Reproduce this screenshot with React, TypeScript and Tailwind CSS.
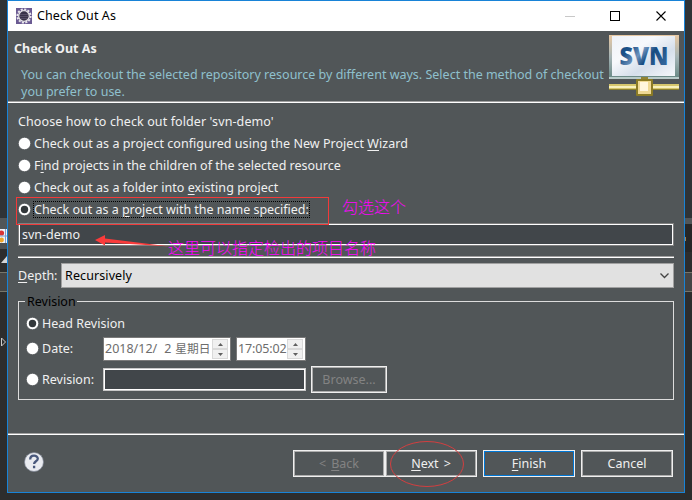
import type { ReactNode } from "react";

function U({ children }: { children: ReactNode }) {
  return <span className="underline decoration-1 underline-offset-2">{children}</span>;
}

function Radio({ checked = false }: { checked?: boolean }) {
  return (
    <svg width="13" height="13" viewBox="0 0 13 13" className="mb-px shrink-0">
      <circle cx="6.5" cy="6.5" r="6.2" fill="#fff" stroke="#33373a" strokeWidth=".6" />
      {checked && <circle cx="6.5" cy="6.5" r="3.7" fill="#33383b" />}
    </svg>
  );
}

function Option({ checked, children }: { checked?: boolean; children: ReactNode }) {
  return (
    <div className="flex h-[22px] items-center gap-[3px]">
      <Radio checked={checked} />
      <span className="leading-[14px] whitespace-nowrap">{children}</span>
    </div>
  );
}

function Spinner() {
  return (
    <div className="flex h-[20px] w-4 shrink-0 flex-col">
      <div className="flex h-[10px] items-center justify-center border border-[#d9d9d9] bg-[#f0f0f0]">
        <svg width="5" height="3"><path d="M0 3h5L2.5 0z" fill="#606060" /></svg>
      </div>
      <div className="flex h-[10px] items-center justify-center border border-[#d9d9d9] bg-[#f0f0f0]">
        <svg width="5" height="3"><path d="M0 0h5L2.5 3z" fill="#606060" /></svg>
      </div>
    </div>
  );
}

function Button({ className = "", inner = "border-[#adadad]", children }: { className?: string; inner?: string; children: ReactNode }) {
  return (
    <button className={`flex h-[27px] border border-[#f0f0f0] ${className}`}>
      <span className={`flex h-full w-full items-center justify-center border ${inner}`}>
        <span className="whitespace-pre pt-px leading-[14px]">{children}</span>
      </span>
    </button>
  );
}

function Rule() {
  return <div className="h-[2px] shrink-0 border-t border-[#a0a0a0] bg-white" />;
}

function EclipseIcon() {
  return (
    <svg width="16" height="16" viewBox="0 0 16 16">
      <rect width="16" height="16" fill="#6a5a92" />
      <circle cx="8" cy="8" r="6.6" fill="none" stroke="#e9e7ec" strokeWidth="2" strokeDasharray="2.1 1.350" />
      <circle cx="8" cy="8" r="5.3" fill="#38324a" stroke="#e3e1e6" strokeWidth="1.3" />
      <path d="M4 6.5h8M3.5 8.5h9M4.5 10.5h7" stroke="#5d566e" strokeWidth=".8" />
    </svg>
  );
}

function SvnLogo() {
  return (
    <svg width="70" height="62" viewBox="0 0 70 62">
      <defs>
        <linearGradient id="frame" x1="0" y1="0" x2="0" y2="1">
          <stop offset="0" stopColor="#e8c8a2" />
          <stop offset=".5" stopColor="#a5b4b6" />
          <stop offset="1" stopColor="#668783" />
        </linearGradient>
        <linearGradient id="screen" x1="0" y1="0" x2="1" y2="1">
          <stop offset="0" stopColor="#eef2f8" />
          <stop offset=".35" stopColor="#f7f9fc" />
          <stop offset=".65" stopColor="#d6dfeb" />
          <stop offset="1" stopColor="#f6f8fb" />
        </linearGradient>
        <linearGradient id="letters" x1="0" y1="0" x2="1" y2=".6">
          <stop offset="0" stopColor="#184b80" />
          <stop offset=".28" stopColor="#1c5188" />
          <stop offset=".5" stopColor="#6e93bd" />
          <stop offset=".68" stopColor="#174b80" />
          <stop offset="1" stopColor="#31649a" />
        </linearGradient>
      </defs>
      <rect width="70" height="44" fill="url(#frame)" />
      <rect x="3" y="1" width="63" height="40" fill="url(#screen)" />
      <rect y="42" width="70" height="2" fill="#b9cbca" />
      <text x="10.5" y="30" textLength="49" lengthAdjust="spacingAndGlyphs" fontFamily="Open Sans, Noto Sans" fontWeight="800" fontSize="24" fill="url(#letters)">SVN</text>
      <rect x="32" y="42" width="7" height="3" fill="#918435" />
      <rect y="49" width="70" height="6" fill="#d6c76c" />
      <rect y="51" width="70" height="2" fill="#f8f1bc" />
      <rect y="54" width="70" height="1" fill="#8c802d" />
      <rect x="27" y="44" width="17" height="17" rx="1" fill="#8b7b25" />
      <rect x="29" y="46" width="13" height="13" fill="#efd995" />
      <rect x="31" y="47" width="8" height="9" fill="#fff6df" />
    </svg>
  );
}

function LeftBackdrop() {
  return (
    <div className="flex w-[7px] shrink-0 flex-col bg-[#2d2d2d]">
      <div className="h-[218px] bg-[#2f3336]" />
      <div className="h-[11px] bg-[#515658]" />
      <svg width="7" height="14" viewBox="0 0 7 14">
        <rect width="7" height="14" fill="#eef3fa" />
        <circle cx="1.5" cy="4" r="2.6" fill="#d93434" />
        <path d="M0 7h7M5.5 0v14" stroke="#7f9cc9" />
        <circle cx="1.5" cy="11" r="2.4" fill="#efa529" />
      </svg>
      <div className="h-[6px] bg-[#4c5052]" />
      <div className="h-[23px] pt-[7px]">
        <svg width="7" height="7"><path d="M7 0v7H1z" fill="#d4d4d4" /></svg>
      </div>
      <div className="h-[20px] border-y border-[#77766b] bg-[#454545]" />
      <div className="pt-[45px]">
        <svg width="7" height="10"><path d="M1.5 1v8L5.5 5z" fill="none" stroke="#ccc" /></svg>
      </div>
    </div>
  );
}

function RightBackdrop() {
  return (
    <div className="flex w-[7px] shrink-0 flex-col bg-[#2d2d2d]">
      <div className="h-[218px] bg-[#2f3336]" />
      <div className="h-[6px] bg-[#515658]" />
      <div className="h-[28px] bg-[#262626] pt-[13px]">
        <div className="h-[4px] w-px bg-[#a8824f]" />
      </div>
      <div className="h-[20px]" />
      <div className="h-[20px] border-y border-[#77766b] bg-[#454545]" />
    </div>
  );
}

export default function App() {
  return (
    <div className="relative flex h-[500px] w-[692px] overflow-hidden bg-[#2d2d2d] font-['Noto_Sans','Noto_Sans_CJK_SC',sans-serif] text-[12.5px] text-[#f0f0f0]">
      <LeftBackdrop />
      <main className="flex h-[493px] w-[678px] shrink-0 flex-col border border-[#1883d7] bg-[#515658]">
        <header className="flex h-[30px] shrink-0 items-center bg-white pl-2 text-black">
          <EclipseIcon />
          <h1 className="ml-[5px] grow tracking-[0.1px]">Check Out As</h1>
          <svg width="102" height="12" className="mr-[17px]" fill="none" shapeRendering="crispEdges">
            <path d="M0 6.5h10" stroke="#c8c8c8" />
            <rect x="45.5" y="1.5" width="9" height="9" stroke="#000" />
            <path d="M91.5 1.5l9 9m0-9l-9 9" stroke="#000" shapeRendering="auto" strokeWidth="1.1" />
          </svg>
        </header>

        <section className="flex h-[70px] shrink-0 justify-between pl-[6px]">
          <div className="pt-[9px]">
            <h2 className="leading-[18px] font-bold">Check Out As</h2>
            <p className="mt-[8px] ml-[7px] w-[588px] leading-[17px] whitespace-nowrap text-[#8fc0cd]">
              You can checkout the selected repository resource by different ways. Select the method of checkout
              <br />
              you prefer to use.
            </p>
          </div>
          <div className="mr-[5px] pt-1"><SvnLogo /></div>
        </section>
        <Rule />

        <section className="flex h-[330px] shrink-0 flex-col px-[10px]">
          <p className="mt-[8px] h-[21px] leading-[21px] tracking-[0.1px]">Choose how to check out folder 'svn-demo'</p>
          <div className="mt-[1px] h-[90px]">
            <Option><span className="tracking-[0.04px]">Check out as a project configured using the New Project <U>W</U>izard</span></Option>
            <Option>F<U>i</U>nd projects in the children of the selected resource</Option>
            <Option><span className="tracking-[0.04px]">Check out as a folder into <U>e</U>xisting project</span></Option>
            <Option checked>
              <span className="-mt-px -ml-px block h-[17px] border border-dotted border-black leading-[16px] tracking-[-0.02px]">Check out as a <U>p</U>roject with the name specified:</span>
            </Option>
          </div>
          <div className="h-[23px] shrink-0 border border-[#808080]">
            <div className="flex h-full items-center border border-white bg-[#41464a] pt-px pl-[2px]">svn-demo</div>
          </div>
          <div className="mt-[10px]"><Rule /></div>
          <div className="mt-[5px] flex h-[25px] shrink-0 items-center">
            <span className="w-[43px] shrink-0 leading-[14px]"><U>D</U>epth:</span>
            <div className="flex h-[25px] grow items-center justify-between border border-[#a0a0a0] bg-[#e1e1e1] pt-px pr-[4px] pl-[3px] text-black">
              <span className="tracking-[0.1px]">Recursively</span>
              <svg width="9" height="6" fill="none"><path d="M.5.5l4 4 4-4" stroke="#444" strokeWidth="1.3" /></svg>
            </div>
          </div>
          <div className="mt-[13px] h-[99px] shrink-0 border border-[#dcdcdc]">
            <div className="-mt-[8px] ml-[6px] h-[16px] w-[52px] bg-[#515658] pl-[2px] leading-[16px] text-black">Revision</div>
            <div className="mt-[3px] ml-[7px]"><Option checked>Head Revision</Option></div>
            <div className="mt-[2px] ml-[7px] flex h-[24px] items-center">
              <div className="w-[77px]"><Option>Date:</Option></div>
              <div className="flex h-[24px] w-[128px] items-center justify-between border border-[#7a7a7a] bg-white pr-[2px] pl-[1px] whitespace-pre text-[#6d6d6d]">
                <span className="flex items-center"><span>2018/12/</span><span className="ml-[7px]">2</span><span className="ml-[4px] text-[11.7px]">星期日</span></span><Spinner />
              </div>
              <div className="ml-[5px] flex h-[24px] w-[70px] items-center justify-between border border-[#7a7a7a] bg-white pr-[2px] pl-[1px] text-[#6d6d6d]">
                <span className="tracking-[-0.15px]">17:05:02</span><Spinner />
              </div>
            </div>
            <div className="mt-[5px] ml-[7px] flex h-[27px] items-center">
              <div className="w-[77px]"><Option>Revision:</Option></div>
              <div className="h-[23px] w-[203px] border border-[#c8c8c8]"><div className="h-full border border-white bg-[#41464a]" /></div>
              <Button className="ml-[5px] w-[76px] text-[#838383]">Browse...</Button>
            </div>
          </div>
        </section>
        <Rule />

        <footer className="flex h-[57px] shrink-0 items-start pt-[15px] pr-[11px] pl-[16px]">
          <svg width="20" height="20" viewBox="0 0 20 20" className="mt-[2px] mr-auto">
            <circle cx="10" cy="10" r="9.5" fill="#e9ebf0" stroke="#7c8494" strokeWidth=".7" />
            <path d="M6.2 7.4c0-5 7.6-4.6 7.6-.7 0 2.5-3.7 2.7-3.7 5.2M10.1 13.8v2.5" fill="none" stroke="#49587c" strokeWidth="2.3" />
          </svg>
          <Button className="w-[92px] text-[#838383]"><span className="mr-[5px]">{"<"}</span><U>B</U>ack</Button>
          <Button className="w-[92px]"><U>N</U>ext<span className="ml-[5px]">{">"}</span></Button>
          <Button className="ml-[6px] w-[92px]" inner="border-[#0078d7]"><U>F</U>inish</Button>
          <Button className="ml-[6px] w-[92px]">Cancel</Button>
        </footer>
      </main>
      <RightBackdrop />

      <svg className="pointer-events-none absolute inset-0" width="692" height="500" fill="none">
        <rect x="16.5" y="197.5" width="312" height="27" stroke="#f23a3a" />
        <path d="M95 240l10-5v3.5l65 8-65-4v3z" fill="#fa3b3b" />
        <ellipse cx="427" cy="464" rx="36.5" ry="22.5" stroke="#d33f40" />
      </svg>
      <div className="absolute top-[195px] left-[342px] font-['Noto_Sans_CJK_SC',sans-serif] text-[16px] leading-[22px] font-light text-[#ff00ff]">勾选这个</div>
      <div className="absolute top-[237px] left-[168px] font-['Noto_Sans_CJK_SC',sans-serif] text-[16px] leading-[20px] font-light whitespace-nowrap text-[#ff00ff]">这里可以指定检出的项目名称</div>
    </div>
  );
}
